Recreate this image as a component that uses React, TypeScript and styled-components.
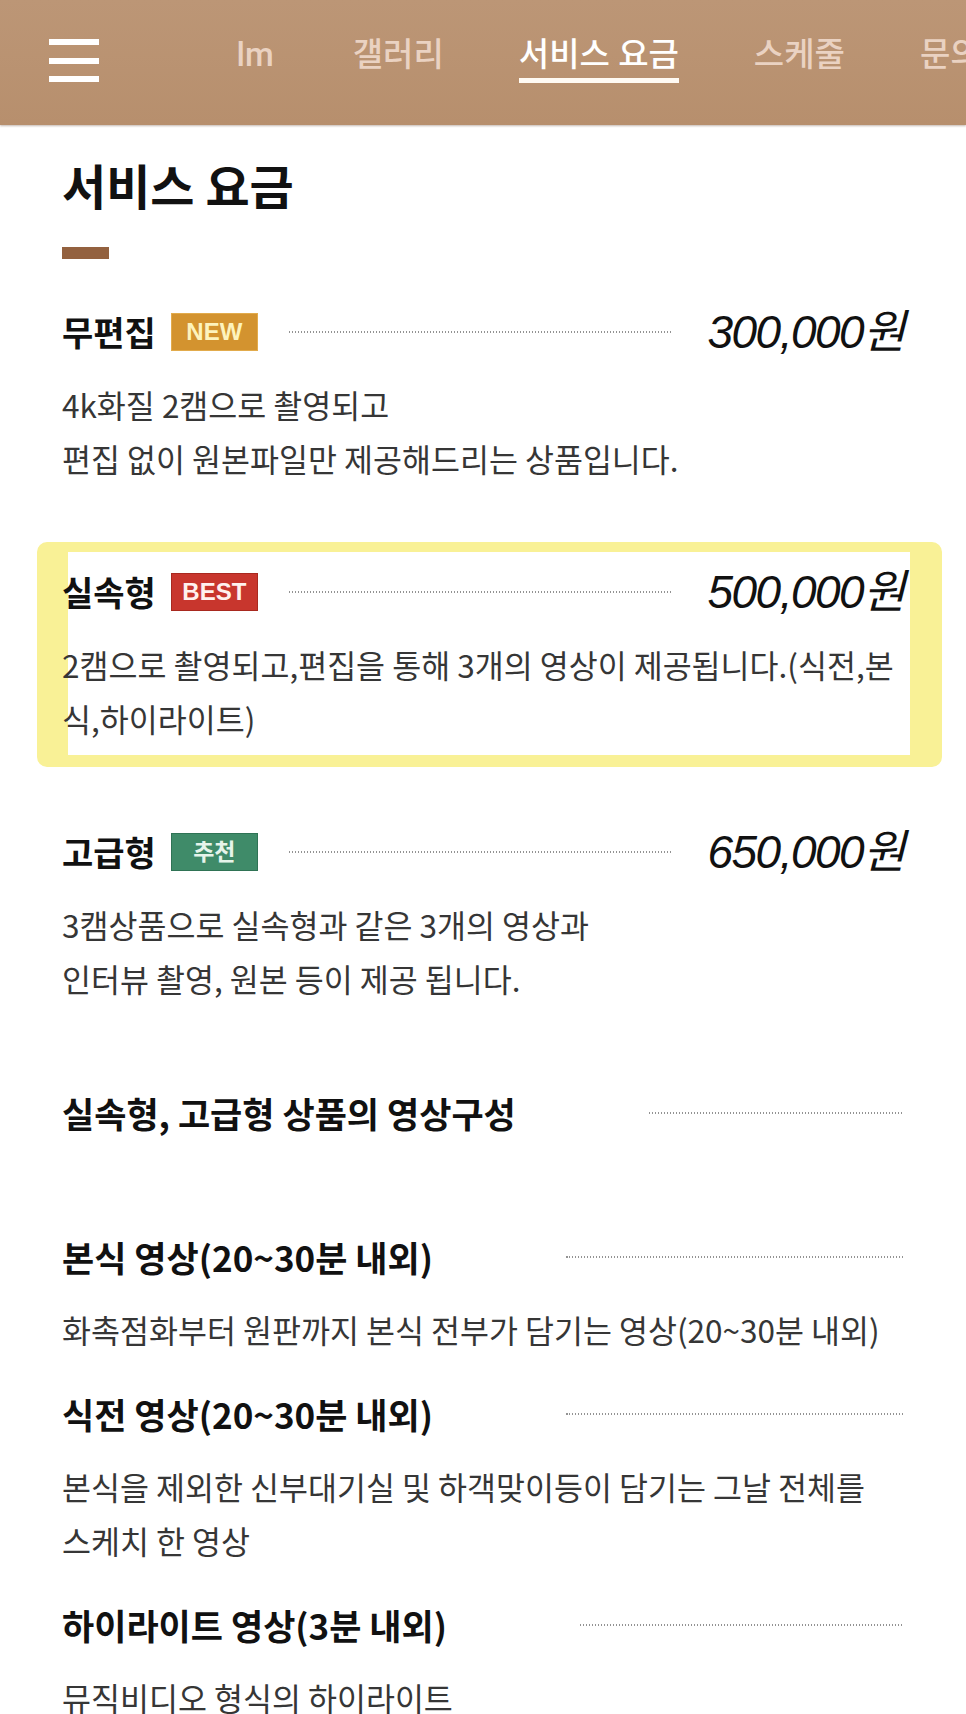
import styled, { createGlobalStyle, css } from "styled-components";

const GlobalStyle = createGlobalStyle`
  * {
    box-sizing: border-box;
  }
  html,
  body {
    margin: 0;
    padding: 0;
    background: #fff;
  }
  body {
    font-family: "Noto Sans CJK KR", "Noto Sans", sans-serif;
    color: #111;
  }
`;

const Header = styled.header`
  display: flex;
  align-items: center;
  height: 125px;
  padding-left: 49px;
  background: linear-gradient(180deg, #bc9676 0%, #b78f6d 100%);
  box-shadow: 0 1px 2px rgba(80, 50, 30, 0.35);
  overflow: hidden;
`;

const MenuButton = styled.button`
  display: flex;
  flex-direction: column;
  justify-content: space-between;
  flex-shrink: 0;
  width: 50px;
  height: 43px;
  margin-bottom: 4px;
  padding: 0;
  border: none;
  background: none;
  cursor: pointer;
`;

const MenuBar = styled.span`
  display: block;
  height: 6px;
  background: #fff;
`;

const Nav = styled.nav`
  flex: 1;
  min-width: 0;
  margin-left: 138px;
  padding-bottom: 7px;
  overflow: hidden;
`;

// the menu is scrolled a little: "Film" is cut at the left edge
const NavTrack = styled.ul`
  display: flex;
  gap: 75px;
  margin: 0 0 0 -27px;
  padding: 0;
  list-style: none;
  white-space: nowrap;
`;

const NavItem = styled.li<{ $active?: boolean }>`
  display: flex;
  flex-direction: column;
  flex-shrink: 0;
  font-family: Roboto, "Noto Sans CJK KR", sans-serif;
  font-size: 33px;
  line-height: 40px;
  font-weight: 500;
  color: ${({ $active }) => ($active ? "#ffffff" : "#ead2c2")};

  &:first-child {
    margin-right: 4px;
  }

  &::after {
    content: "";
    height: 5px;
    margin-top: 3px;
    background: ${({ $active }) => ($active ? "#fffaf3" : "transparent")};
  }
`;

const Main = styled.main`
  padding: 31px 62px 40px;
`;

const Title = styled.h1`
  margin: 0;
  font-size: 48px;
  line-height: 56px;
  font-weight: 700;
  color: #111;
`;

const TitleBar = styled.div`
  width: 47px;
  height: 12px;
  margin-top: 35px;
  background: #93613f;
`;

const PriceList = styled.section`
  display: flex;
  flex-direction: column;
  gap: 87px;
  margin-top: 53px;
`;

const VideoSection = styled.section`
  margin-top: 88px;
`;

const VideoList = styled.div`
  display: flex;
  flex-direction: column;
  gap: 38px;
  margin-top: 104px;
`;

const Item = styled.article<{ $highlight?: boolean }>`
  position: relative;
  isolation: isolate;

  ${({ $highlight }) =>
    $highlight &&
    css`
      &::before {
        content: "";
        position: absolute;
        z-index: -1;
        top: -30px;
        bottom: -22px;
        left: -25px;
        right: -38px;
        border-style: solid;
        border-color: #f9f196;
        border-width: 10px 32px 12px 31px;
        border-radius: 10px;
        filter: blur(0.6px);
      }
    `}
`;

const HeadRow = styled.div`
  display: flex;
  align-items: center;
  height: 40px;
`;

const Name = styled.h2<{ $small?: boolean }>`
  margin: 0;
  font-size: ${({ $small }) => ($small ? "34px" : "35px")};
  line-height: 40px;
  font-weight: 700;
  white-space: nowrap;
  color: #111;
`;

type Tone = "new" | "best" | "pick";

const badgeTones: Record<Tone, { bg: string; fg: string; line: string }> = {
  new: { bg: "#d3932f", fg: "#fdf3bd", line: "#e2ab4c" },
  best: { bg: "#c8362d", fg: "#fff1ee", line: "#a8291f" },
  pick: { bg: "#3f8b69", fg: "#e6f4ea", line: "#2f7355" },
};

const Badge = styled.span<{ $tone: Tone }>`
  display: inline-flex;
  align-items: center;
  justify-content: center;
  flex-shrink: 0;
  width: 87px;
  height: 38px;
  margin-left: 15px;
  border: 1px solid ${({ $tone }) => badgeTones[$tone].line};
  background: ${({ $tone }) => badgeTones[$tone].bg};
  color: ${({ $tone }) => badgeTones[$tone].fg};
  font-family: "Liberation Sans", "Noto Sans CJK KR", sans-serif;
  font-size: ${({ $tone }) => ($tone === "pick" ? "23px" : "24px")};
  font-weight: 700;
  line-height: 1;
`;

const Dots = styled.span<{ $heading?: boolean }>`
  flex: 1;
  height: 2px;
  margin: ${({ $heading }) => ($heading ? "0 0 0 133px" : "0 35px 0 31px")};
  background: repeating-linear-gradient(
    to right,
    #939393 0 1.5px,
    transparent 1.5px 3px
  );
`;

const Price = styled.strong`
  font-family: "Liberation Sans", "Noto Sans CJK KR", sans-serif;
  font-style: italic;
  font-weight: 400;
  font-size: 46px;
  line-height: 40px;
  letter-spacing: -1.5px;
  white-space: nowrap;
  color: #111;
`;

const Desc = styled.p`
  margin: 25px 0 0;
  font-size: 31.5px;
  line-height: 54px;
  color: #363636;
`;

const plans: {
  name: string;
  badge: string;
  tone: Tone;
  price: string;
  lines: string[];
  highlight?: boolean;
}[] = [
  {
    name: "무편집",
    badge: "NEW",
    tone: "new",
    price: "300,000원",
    lines: ["4k화질 2캠으로 촬영되고", "편집 없이 원본파일만 제공해드리는 상품입니다."],
  },
  {
    name: "실속형",
    badge: "BEST",
    tone: "best",
    price: "500,000원",
    lines: [
      "2캠으로 촬영되고,편집을 통해 3개의 영상이 제공됩니다.(식전,본",
      "식,하이라이트)",
    ],
    highlight: true,
  },
  {
    name: "고급형",
    badge: "추천",
    tone: "pick",
    price: "650,000원",
    lines: ["3캠상품으로 실속형과 같은 3개의 영상과", "인터뷰 촬영, 원본 등이 제공 됩니다."],
  },
];

const videos = [
  {
    name: "본식 영상(20~30분 내외)",
    lines: ["화촉점화부터 원판까지 본식 전부가 담기는 영상(20~30분 내외)"],
  },
  {
    name: "식전 영상(20~30분 내외)",
    lines: ["본식을 제외한 신부대기실 및 하객맞이등이 담기는 그날 전체를", "스케치 한 영상"],
  },
  {
    name: "하이라이트 영상(3분 내외)",
    lines: ["뮤직비디오 형식의 하이라이트"],
  },
];

const menu = ["Film", "갤러리", "서비스 요금", "스케줄", "문의"];

const Lines = ({ lines }: { lines: string[] }) => (
  <Desc>
    {lines.map((line, i) => (
      <span key={line}>
        {i > 0 && <br />}
        {line}
      </span>
    ))}
  </Desc>
);

export default function App() {
  return (
    <>
      <GlobalStyle />
      <Header>
        <MenuButton aria-label="메뉴">
          <MenuBar />
          <MenuBar />
          <MenuBar />
        </MenuButton>
        <Nav>
          <NavTrack>
            {menu.map((label) => (
              <NavItem key={label} $active={label === "서비스 요금"}>
                {label}
              </NavItem>
            ))}
          </NavTrack>
        </Nav>
      </Header>

      <Main>
        <Title>서비스 요금</Title>
        <TitleBar />

        <PriceList>
          {plans.map((plan) => (
            <Item key={plan.name} $highlight={plan.highlight}>
              <HeadRow>
                <Name $small>{plan.name}</Name>
                <Badge $tone={plan.tone}>{plan.badge}</Badge>
                <Dots />
                <Price>{plan.price}</Price>
              </HeadRow>
              <Lines lines={plan.lines} />
            </Item>
          ))}
        </PriceList>

        <VideoSection>
          <HeadRow>
            <Name>실속형, 고급형 상품의 영상구성</Name>
            <Dots $heading />
          </HeadRow>

          <VideoList>
            {videos.map((video) => (
              <Item key={video.name}>
                <HeadRow>
                  <Name>{video.name}</Name>
                  <Dots $heading />
                </HeadRow>
                <Lines lines={video.lines} />
              </Item>
            ))}
          </VideoList>
        </VideoSection>
      </Main>
    </>
  );
}
